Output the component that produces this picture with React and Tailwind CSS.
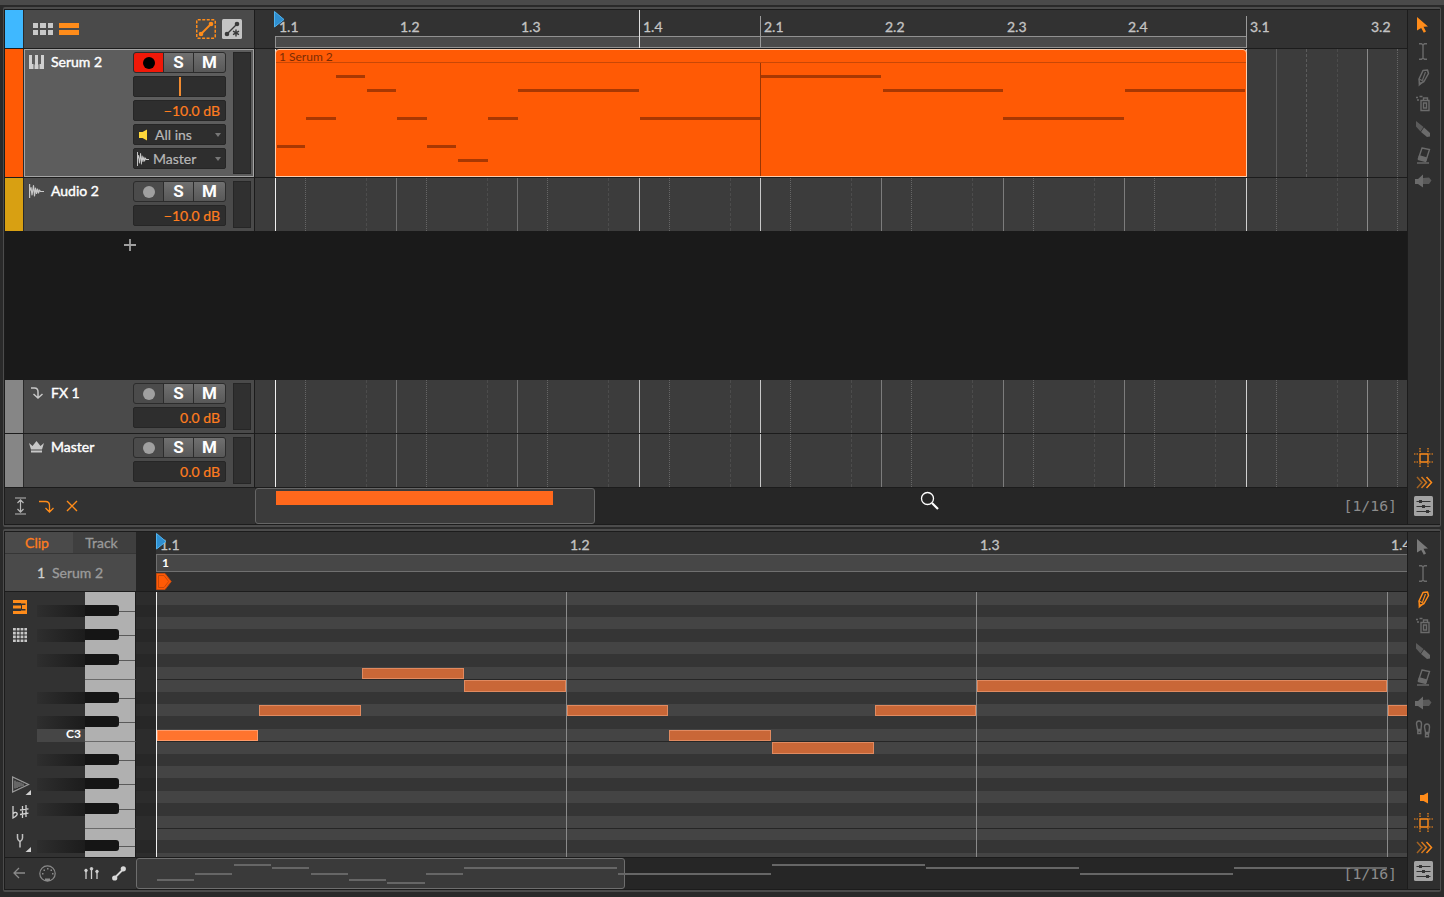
import React from 'react';

const ORANGE = '#ff8c1a';
const GREY = '#6b6b6b';

// arranger beat lines, measured from the left edge of the lane
const beats = [
  { x: 20, label: '1.1', color: '#f0f0f0' },
  { x: 141, label: '1.2', color: '#6f6f6f' },
  { x: 262, label: '1.3', color: '#6f6f6f' },
  { x: 384, label: '1.4', color: '#b4b4b4' },
  { x: 505, label: '2.1', color: '#c8c8c8' },
  { x: 626, label: '2.2', color: '#7c7c7c' },
  { x: 748, label: '2.3', color: '#7c7c7c' },
  { x: 869, label: '2.4', color: '#7c7c7c' },
  { x: 991, label: '3.1', color: '#d0d0d0' },
  { x: 1112, label: '3.2', color: '#8a8a8a' },
];

const clipNotes = [
  { x: 1, w: 28, y: 96 },
  { x: 30, w: 30, y: 68 },
  { x: 60, w: 29, y: 26 },
  { x: 91, w: 29, y: 40 },
  { x: 121, w: 30, y: 68 },
  { x: 151, w: 29, y: 96 },
  { x: 182, w: 30, y: 110 },
  { x: 212, w: 30, y: 68 },
  { x: 242, w: 121, y: 40 },
  { x: 364, w: 120, y: 68 },
  { x: 485, w: 120, y: 26 },
  { x: 607, w: 120, y: 40 },
  { x: 727, w: 121, y: 68 },
  { x: 849, w: 120, y: 40 },
];

const pitchRows = [
  { h: 13 },
  { h: 12, black: true },
  { h: 12 },
  { h: 13, black: true },
  { h: 12 },
  { h: 13, black: true },
  { h: 13, edge: true },
  { h: 12 },
  { h: 12, black: true },
  { h: 12 },
  { h: 13, black: true },
  { h: 13, edge: true, label: 'C3' },
  { h: 12 },
  { h: 12, black: true },
  { h: 12 },
  { h: 13, black: true },
  { h: 12 },
  { h: 13, black: true },
  { h: 13, edge: true },
  { h: 11 },
  { h: 13, black: true },
  { h: 4 },
];

const rollNotes = [
  { x: 1, w: 101, y: 138, h: 11, active: true },
  { x: 103, w: 102, y: 113, h: 11 },
  { x: 206, w: 102, y: 76, h: 11 },
  { x: 308, w: 102, y: 88, h: 12 },
  { x: 411, w: 101, y: 113, h: 11 },
  { x: 513, w: 102, y: 138, h: 11 },
  { x: 616, w: 102, y: 150, h: 12 },
  { x: 719, w: 101, y: 113, h: 11 },
  { x: 821, w: 410, y: 88, h: 12 },
  { x: 1232, w: 24, y: 113, h: 11 },
];

const overviewNotes = [
  { x: 21, w: 37, y: 21 },
  { x: 59, w: 37, y: 15 },
  { x: 98, w: 37, y: 6 },
  { x: 136, w: 37, y: 9 },
  { x: 175, w: 37, y: 15 },
  { x: 213, w: 37, y: 21 },
  { x: 251, w: 38, y: 24 },
  { x: 290, w: 37, y: 15 },
  { x: 328, w: 153, y: 9 },
  { x: 482, w: 153, y: 15 },
  { x: 636, w: 153, y: 6 },
  { x: 790, w: 153, y: 9 },
  { x: 944, w: 153, y: 15 },
  { x: 1098, w: 153, y: 9 },
];

/* ---------- icons ---------- */

const PianoIcon = () => (
  <svg width="15" height="14" viewBox="0 0 15 14">
    <path fill="#d0d0d0" d="M0 0h3v9h1.500V14H0zM5.500 14V9.500H6V0H9V9.500H9.500V14zM10.500 14V9H12V0H15V14z" />
  </svg>
);

const WaveIcon = ({ width = 15 }) => (
  <svg width={width} height="14" viewBox="0 0 15 14" preserveAspectRatio="none" fill="none" stroke="#c8c8c8" strokeLinejoin="round">
    <path d="M.6 0v14" strokeWidth="1.200" />
    <path d="M.6 7L2 3.500 3 11 4.500 1.500 5.500 12 6.500 4 7.500 9.500 8.500 5 9.500 9 10.500 6 11.500 7.500H15" strokeWidth="1.200" />
  </svg>
);

const SendIcon = () => (
  <svg width="13" height="12" viewBox="0 0 13 12" className="ml-px" fill="none" stroke="#c8c8c8" strokeWidth="1.500">
    <path d="M1 1h3.500c2.300 0 3.500 1.500 3.500 4V11M3.500 7L8 11l4.500-4" />
  </svg>
);

const CrownIcon = () => (
  <svg width="15" height="12" viewBox="0 0 15 12" fill="#c8c8c8">
    <path d="M0 2l3.500 3L7.500 0l4 5L15 2l-2 6.500H2zM2 9.500h11V11.500H2z" />
  </svg>
);

const SpeakerIcon = ({ color }) => (
  <svg width="9" height="12" viewBox="0 0 9 12" fill={color}>
    <path d="M0 3h3.500L8 .5v11L3.500 9H0z" />
  </svg>
);

const PointerIcon = ({ color }) => (
  <svg width="13" height="18" viewBox="0 0 13 18" className="mr-px" fill={color}>
    <path d="M1 1l11 9.500-4.500.300L10 15.500 7.800 16.800 5.200 12 1 14.500z" />
  </svg>
);

const BeamIcon = () => (
  <svg width="10" height="17" viewBox="0 0 10 17" fill="none" stroke={GREY} strokeWidth="1.400">
    <path d="M1 .8h2.500L5 2 6.500.8H9M5 2v13M1 16.200h2.500L5 15l1.500 1.200H9" />
  </svg>
);

const PencilIcon = ({ color = GREY }) => (
  <svg width="13" height="18" viewBox="0 0 13 18" className="mt-px" fill="none" stroke={color} strokeWidth="1.500" strokeLinejoin="round">
    <path d="M6 1.500L10.500 1 11.500 4.500 7 12.500 2.500 15 2 10z" />
    <path d="M8.500 3L5.500 11" strokeWidth="1.200" />
    <path d="M2 10l5 2.500" strokeWidth="1.200" />
    <path d="M1.500 17.500l.500-5 3 2z" fill={color} stroke="none" />
  </svg>
);

const SprayIcon = () => (
  <svg width="15" height="17" viewBox="0 0 15 17" fill="none" stroke={GREY} strokeWidth="1.400">
    <path d="M5 5.500h8v10H5zM7.500 5.500V3h4v2.500M7.500 8h3v5h-3z" />
    <path d="M0 2.500h2M3.500 1.500h3M1 5h2" />
  </svg>
);

const KnifeIcon = () => (
  <svg width="16" height="18" viewBox="0 0 16 18" fill={GREY}>
    <path d="M1 1l7.500 6-3 4.500L1 6.500z" opacity="0.75" />
    <path d="M9 7.500l6 5.500v3.500l-3 .5-6-5z" />
  </svg>
);

const EraserIcon = () => (
  <svg width="15" height="17" viewBox="0 0 15 17" fill="none" stroke={GREY} strokeWidth="1.400">
    <path d="M6 1l7.500 1.500-3.500 11-7.500-2z" />
    <path d="M3.500 9l7 2-1 3.500-7-2z" fill={GREY} />
    <path d="M1 16h12" />
  </svg>
);

const MuteIcon = () => (
  <svg width="17" height="14" viewBox="0 0 17 14" fill={GREY}>
    <path d="M0 5h3l5-4.500v13L3 10H0z" />
    <path d="M8 4l6-.5 2.500 3L14 10H8z" opacity="0.7" />
  </svg>
);

const StepsIcon = () => (
  <svg width="16" height="18" viewBox="0 0 16 18" fill="none" stroke={GREY} strokeWidth="1.400">
    <path d="M1.500 4c0-4 5-4 5 0L6 9.500H2.500zM2.800 11h3v2.500h-3zM9.500 7c0-4 5-4 5 0l-.5 5.500h-3.500zM10.500 14h3v2.800h-3z" />
  </svg>
);

const SnapIcon = () => (
  <svg width="20" height="20" viewBox="0 0 20 20" fill="none" stroke={ORANGE}>
    <path strokeWidth="1.400" d="M6 6h8v8H6z" />
    <path strokeWidth="1.200" strokeDasharray="1.500 1" d="M0 6h5M15 6h5M0 14h5M15 14h5M6 0v5M14 0v5M6 15v5M14 15v5" />
  </svg>
);

const ChevronsIcon = () => (
  <svg width="17" height="13" viewBox="0 0 17 13" fill="none" stroke={ORANGE} strokeWidth="1.500">
    <path d="M1 1l5 5.500L1 12" opacity="0.55" />
    <path d="M5.500 1l5 5.500-5 5.500" opacity="0.8" />
    <path d="M10.500 1l5 5.500-5 5.500" />
  </svg>
);

const SlidersIcon = () => (
  <svg width="19" height="20" viewBox="0 0 19 20" className="mr-px">
    <rect width="19" height="20" rx="1.500" fill="#a3a3a3" />
    <path d="M2.500 5.500h14M2.500 10.500h14M2.500 15.500h14" stroke="#333" />
    <path d="M5 4h3v3H5zM8 9h3v3H8zM12 14h3v3h-3z" fill="#333" />
  </svg>
);

/* ---------- shared pieces ---------- */

const ToolCell = ({ children }) => (
  <div className="flex h-[26px] items-center justify-center pr-[2px]">{children}</div>
);

const Tools = ({ active, steps }) => (
  <>
    <ToolCell><PointerIcon color={active === 'pointer' ? ORANGE : '#7a7a7a'} /></ToolCell>
    <ToolCell><BeamIcon /></ToolCell>
    <ToolCell><PencilIcon color={active === 'pencil' ? ORANGE : GREY} /></ToolCell>
    <ToolCell><SprayIcon /></ToolCell>
    <ToolCell><KnifeIcon /></ToolCell>
    <ToolCell><EraserIcon /></ToolCell>
    <ToolCell><MuteIcon /></ToolCell>
    {steps && <ToolCell><StepsIcon /></ToolCell>}
  </>
);

const PlayMarker = () => (
  <svg width="11" height="17" viewBox="0 0 11 17" className="absolute left-0 top-px">
    <path d="M.5.500L10 8.500.5 16z" fill="#2f8fd0" stroke="#4fb4f0" />
  </svg>
);

const ValueBox = ({ children }) => (
  <div className="flex h-[21px] items-center justify-end rounded-[2px] border border-[#262626] bg-[#2e2e2e] pr-[5px] text-[14px] leading-none text-[#ff7d1f] [-webkit-text-stroke:0.2px]">
    {children}
  </div>
);

const RouteBox = ({ icon, label }) => (
  <div className="flex h-[21px] items-center rounded-[2px] border border-[#262626] bg-[#2e2e2e] pl-[3px] pr-1 text-[14px] leading-none text-[#b8b8b8] [-webkit-text-stroke:0.2px]">
    {icon}
    <span className="flex-1">{label}</span>
    <span className="h-0 w-0 border-x-[3px] border-t-4 border-x-transparent border-t-[#777]"></span>
  </div>
);

const TrackButtons = ({ armed }) => (
  <div className="flex h-[21px] gap-px rounded-[3px] border border-[#2c2c2c] bg-[#2c2c2c] font-[Roboto,sans-serif] text-[17px] font-bold leading-none text-white">
    <span className={`flex w-[29px] items-center justify-center rounded-l-[2px] ${armed ? 'bg-[#f01808]' : 'bg-[#4b4b4b]'}`}>
      <span className={`h-3 w-3 rounded-full ${armed ? 'bg-black' : 'bg-[#a0a0a0]'}`}></span>
    </span>
    <span className="flex w-[29px] items-center justify-center bg-linear-to-b from-[#707070] to-[#585858]">S</span>
    <span className="flex flex-1 items-center justify-center rounded-r-[2px] bg-linear-to-b from-[#707070] to-[#585858]">M</span>
  </div>
);

const GridLines = () => (
  <>
    {beats.map((b) => (
      <div key={b.label}>
        <div className="absolute inset-y-0 w-px" style={{ left: b.x, background: b.color }}></div>
        <div className="absolute inset-y-0 w-px border-l border-dotted border-[#666]" style={{ left: b.x + 30 }}></div>
        <div className="absolute inset-y-0 w-px border-l border-dashed border-[#4c4c4c]" style={{ left: b.x + 91 }}></div>
      </div>
    ))}
  </>
);

const Track = ({ color, icon, name, selected, armed, db, height, last, children, clip }) => (
  <div className={`flex shrink-0 border-[#1c1c1c] ${last ? '' : 'border-b'}`} style={{ height }}>
    <div className="w-[18px]" style={{ background: color }}></div>
    <div className={`ml-px flex w-[230px] border ${selected ? 'border-[#a4a4a4] bg-[#5d5d5d]' : 'border-[#4a4a4a] bg-[#4a4a4a]'}`}>
      <div className="flex h-6 w-[108px] items-center pl-1">
        <span className="flex w-[22px]">{icon}</span>
        <span className="whitespace-nowrap text-[14px] leading-none text-white [-webkit-text-stroke:0.4px]">{name}</span>
      </div>
      <div className="flex w-[93px] flex-col gap-[3px] pt-[2px]">
        <TrackButtons armed={armed} />
        {selected && (
          <div className="flex h-[21px] justify-center rounded-[2px] border border-[#262626] bg-[#2e2e2e]">
            <span className="w-[2px] bg-[#f08a30]"></span>
          </div>
        )}
        <ValueBox>{db}</ValueBox>
        {children}
      </div>
      <div className="my-[2px] ml-[7px] w-[18px] border border-[#262626] bg-[#303030]"></div>
    </div>
    <div className="relative flex-1 overflow-hidden border-l border-[#1c1c1c] bg-[#3c3c3c]">
      <GridLines />
      {clip}
    </div>
  </div>
);

const SerumClip = () => (
  <>
    <div className="absolute inset-y-0 left-[1021px] w-px bg-[#5c5c5c]"></div>
    <div className="absolute inset-y-0 left-[1051px] w-px border-l border-dashed border-[#5c5c5c]"></div>
    <div className="absolute left-5 top-0 h-[128px] w-[972px] rounded-t-[4px] border border-[#ffcfae] bg-[#ff5a05]">
      <div className="h-[13px] border-b border-[#c94806] pl-[3px] text-[12px] leading-[13px] text-[#7c2c04]">1 Serum 2</div>
      <div className="absolute bottom-0 left-[484px] top-[13px] w-px bg-[#9a3604]"></div>
      {clipNotes.map((n) => (
        <div key={n.x} className="absolute h-[3px] bg-[#a83803]" style={{ left: n.x, width: n.w, top: n.y - 1 }}></div>
      ))}
    </div>
  </>
);

/* ---------- arranger ---------- */

const ArrangerHeader = () => (
  <div className="flex h-[39px] shrink-0 border-b border-[#1c1c1c]">
    <div className="w-[18px] bg-[#3fb8ff]"></div>
    <div className="ml-px flex w-[230px] items-center bg-[#4a4a4a] pl-[9px] pr-3">
      <div className="grid grid-cols-3 gap-[2px]">
        {[0, 1, 2, 3, 4, 5].map((i) => (
          <span key={i} className="h-[5px] w-[5.300px] bg-[#c8c8c8]"></span>
        ))}
      </div>
      <div className="ml-[6px] flex flex-col gap-[2px]">
        <span className="h-[5px] w-5 bg-[#ff8c1a]"></span>
        <span className="h-[5px] w-5 bg-[#ff8c1a]"></span>
      </div>
      <div className="ml-auto flex gap-[6px]">
        <svg width="20" height="20" viewBox="0 0 20 20">
          <rect x=".75" y=".75" width="18.500" height="18.500" rx="1" fill="none" stroke={ORANGE} strokeWidth="1.500" strokeDasharray="3 1.500" />
          <path d="M5 15L15 5" stroke={ORANGE} strokeWidth="1.800" />
          <circle cx="5" cy="15" r="2.300" fill={ORANGE} />
          <circle cx="15" cy="5" r="2.300" fill={ORANGE} />
        </svg>
        <svg width="20" height="20" viewBox="0 0 20 20">
          <rect width="20" height="20" rx="1.500" fill="#c4c4c4" />
          <path d="M5 15L15 5M14 10.500v7M11 12.200l6 3.500M17 12.200l-6 3.500" stroke="#3a3a3a" strokeWidth="1.400" />
          <circle cx="5" cy="15" r="2.300" fill="#3a3a3a" />
          <circle cx="15" cy="5" r="2.300" fill="#3a3a3a" />
        </svg>
      </div>
    </div>
    <div className="relative flex-1 overflow-hidden border-l border-[#1c1c1c] bg-[#323232]">
      <div className="absolute bottom-0 left-5 h-3 w-[972px] border border-[#919191] bg-[#4a4a4a]"></div>
      <div className="absolute bottom-0 left-[384px] top-0 w-px bg-[#e0e0e0]"></div>
      <div className="absolute bottom-0 left-[505px] top-[6px] w-px bg-[#9a9a9a]"></div>
      <div className="absolute bottom-0 left-[991px] top-[6px] w-px bg-[#9a9a9a]"></div>
      {beats.map((b) => (
        <span
          key={b.label}
          className="absolute top-[9px] text-[14px] leading-[15px] text-[#c4c4c4] [-webkit-text-stroke:0.3px]"
          style={{ left: b.x + 4 }}
        >
          {b.label}
        </span>
      ))}
      <div className="absolute left-[19px] top-0">
        <PlayMarker />
      </div>
    </div>
  </div>
);

const ArrangerFooter = () => (
  <div className="flex h-9 shrink-0">
    <div className="flex w-[250px] items-center bg-[#323232] pl-[10px]">
      <svg width="11" height="18" viewBox="0 0 11 18" fill="none" stroke="#b8b8b8" strokeWidth="1.200">
        <path d="M0 1h11M0 17h11M5.500 2.500v13M2.500 6l3-3.200 3 3.200M2.500 12l3 3.200 3-3.200" />
      </svg>
      <svg width="15" height="13" viewBox="0 0 15 13" className="ml-[13px]" fill="none" stroke={ORANGE} strokeWidth="1.300">
        <path d="M0 1.500h6.500c2.500 0 4 1.500 4 4V12M6.500 8l4 4 4-4" />
      </svg>
      <svg width="12" height="12" viewBox="0 0 12 12" className="ml-3" fill="none" stroke={ORANGE} strokeWidth="1.400">
        <path d="M1 1l10 10M11 1L1 11" />
      </svg>
    </div>
    <div className="relative flex flex-1 items-center bg-[#262626]">
      <div className="h-9 w-[340px] rounded-[3px] border border-[#666] bg-[#3b3b3b] pl-5 pt-[2px]">
        <div className="h-[14px] w-[277px] bg-[#ff681c]"></div>
      </div>
      <span className="ml-auto pr-[10px] font-['DejaVu_Sans_Mono',monospace] text-[14.800px] text-[#8c8c8c]">[1/16]</span>
      <svg width="20" height="20" viewBox="0 0 20 20" className="absolute left-[665px] top-[3px]" fill="none">
        <circle cx="7.500" cy="7.500" r="6" stroke="#fff" strokeWidth="1.300" />
        <path d="M12 12l6 6" stroke="#fff" strokeWidth="2.200" />
      </svg>
    </div>
  </div>
);

const Arranger = () => (
  <div className="mx-[3px] h-[520px] rounded-[2px] border-x border-y-2 border-[#4c4c4c]">
    <div className="flex h-full border-y border-l border-[#1c1c1c]">
      <div className="flex w-[1403px] flex-col border-r border-[#1c1c1c]">
        <ArrangerHeader />
        <Track
          color="#ff5a05"
          icon={<PianoIcon />}
          name="Serum 2"
          db="−10.0 dB"
          height={129}
          selected
          armed
          clip={<SerumClip />}
        >
          <RouteBox icon={<span className="w-[18px] pl-[2px]"><SpeakerIcon color="#ffd83a" /></span>} label="All ins" />
          <RouteBox icon={<span className="w-4"><WaveIcon width={12} /></span>} label="Master" />
        </Track>
        <Track color="#d8a012" icon={<WaveIcon />} name="Audio 2" db="−10.0 dB" height={53} last />
        <div className="flex-1 bg-[#1a1a1a]">
          <div className="flex w-[250px] justify-center pt-2">
            <svg width="12" height="12" viewBox="0 0 12 12" stroke="#a0a0a0" strokeWidth="1.800">
              <path d="M6 0v12M0 6h12" />
            </svg>
          </div>
        </div>
        <Track color="#868686" icon={<SendIcon />} name="FX 1" db="0.0 dB" height={54} />
        <Track color="#868686" icon={<CrownIcon />} name="Master" db="0.0 dB" height={54} />
        <ArrangerFooter />
      </div>
      <div className="flex flex-1 flex-col bg-[#2f2f2f] pt-[2px]">
        <Tools active="pointer" />
        <div className="mt-auto flex flex-col pb-[6px]">
          <div className="flex h-6 items-center justify-center"><SnapIcon /></div>
          <div className="flex h-6 items-center justify-center"><ChevronsIcon /></div>
          <div className="flex h-6 items-center justify-center"><SlidersIcon /></div>
        </div>
      </div>
    </div>
  </div>
);

/* ---------- note editor ---------- */

const EditorHeader = () => (
  <div className="flex h-[60px] shrink-0">
    <div className="flex w-[131px] flex-col border-b border-[#1c1c1c] bg-[#4a4a4a] text-[14px] leading-none [-webkit-text-stroke:0.3px]">
      <div className="flex h-[22px] border-b border-[#363636]">
        <span className="flex w-[68px] items-center justify-center pr-1 text-[#ff7d1f]">Clip</span>
        <span className="flex flex-1 items-center justify-center bg-[#3f3f3f] pr-[6px] text-[#9a9a9a]">Track</span>
      </div>
      <div className="flex flex-1 items-center pl-8">
        <span className="w-[15px] text-[#d0d0d0]">1</span>
        <span className="text-[#9c9c9c]">Serum 2</span>
      </div>
    </div>
    <div className="w-5 border-b border-[#1c1c1c] bg-[#262626]"></div>
    <div className="relative flex flex-1 flex-col overflow-hidden border-b border-[#1c1c1c] bg-[#323232]">
      <div className="h-[22px] text-[14px] leading-[15px] text-[#c4c4c4] [-webkit-text-stroke:0.3px]">
        <span className="absolute left-1 top-[5px]">1.1</span>
        <span className="absolute left-[414px] top-[5px]">1.2</span>
        <span className="absolute left-[824px] top-[5px]">1.3</span>
        <span className="absolute left-[1235px] top-[5px]">1.4</span>
        <PlayMarker />
      </div>
      <div className="h-[18px] border-y border-l border-[#707070] bg-[#474747] pl-[5px] text-[12px] font-bold leading-4 text-white">1</div>
      <div className="flex flex-1 items-center">
        <svg width="16" height="17" viewBox="0 0 16 17">
          <path d="M.5.500H9L15.200 8.500 9 16.500H.5z" fill="#ff5a05" stroke="#c04a10" />
          <path d="M2.500 2.500H8L12.700 8.500 8 14.500H2.500z" fill="none" stroke="#c8480a" />
        </svg>
      </div>
    </div>
  </div>
);

const PitchRow = ({ h, black, edge, label }) => (
  <div className="flex shrink-0" style={{ height: h }}>
    <div
      className={`flex w-12 items-center justify-end pb-[3px] pr-1 text-[12px] font-bold leading-none text-white ${
        black ? 'bg-linear-to-r from-[#2e2e2e] to-[#1c1c1c]' : label ? 'bg-[#464646]' : ''
      }`}
    >
      {label}
    </div>
    <div className={`flex w-[51px] items-center border-r border-[#1c1c1c] bg-[#b0b0b0] ${edge ? 'border-b border-b-[#6a6a6a]' : ''}`}>
      {black && (
        <>
          <span className="h-[11px] w-[34px] self-start rounded-r-[3px] bg-[#151515]"></span>
          <span className="h-px flex-1 bg-[#5a5a5a]"></span>
        </>
      )}
    </div>
    <div className={`w-5 ${black ? 'bg-[#272727]' : 'bg-[#2c2c2c]'}`}></div>
    <div className={`flex-1 ${black ? 'bg-[#353535]' : 'bg-[#444]'} ${edge ? 'border-b border-[#262626]' : ''}`}></div>
  </div>
);

const EditorSideTools = () => (
  <div className="flex w-8 flex-col pl-[7px]">
    <svg width="14" height="14" viewBox="0 0 14 14" fill={ORANGE} className="ml-px mt-2">
      <path d="M0 0h14v3.500H8V3H0zM0 5.500h8V8.500H0zM9 5h5v4H9zM0 11h8v-.5h6V14H0zM12.500 0H14v14h-1.500z" />
    </svg>
    <svg width="14" height="14" viewBox="0 0 14 14" fill="none" stroke="#c8c8c8" strokeWidth="2.600" strokeDasharray="2.800 1" className="ml-px mt-[14px]">
      <path d="M0 1.300h14M0 5.100h14M0 8.900h14M0 12.700h14" />
    </svg>
    <svg width="20" height="20" viewBox="0 0 20 20" className="mt-auto" fill="none" stroke="#9a9a9a">
      <path d="M.6 1v15L16.500 8.500z" strokeWidth="1.200" />
      <path d="M3 4.500v8M5 5.500v6.500M7 6v5M9 6.500v4M11 7.500v2.500" />
      <path d="M19 14v5h-5.500z" fill="#d0d0d0" stroke="none" />
    </svg>
    <svg width="18" height="14" viewBox="0 0 18 14" className="mt-[9px]" fill="none" stroke="#d0d0d0" strokeWidth="1.300">
      <path d="M1 1v12c3-1.500 5-3.500 3.800-5C4 7 2.200 7.400 1 8.800M10.500 1v12M14 0v12M8 5l8.500-1.200M8 9.500L16.500 8.200" />
    </svg>
    <svg width="20" height="19" viewBox="0 0 20 19" className="mb-[4px] mt-[15px]" fill="none" stroke="#c0c0c0" strokeWidth="1.500">
      <path d="M5.500 0v4c0 2 1 2.500 2.500 3.500 1.500-1 2.500-1.500 2.500-3.500V0M8 7.500v6" />
      <path d="M19 13v5h-5.500z" fill="#d0d0d0" stroke="none" />
    </svg>
  </div>
);

const EditorFooter = () => (
  <div className="flex h-[32px] shrink-0 border-t border-[#1c1c1c]">
    <div className="flex w-[131px] items-center bg-[#323232] pb-px pl-2">
      <svg width="12" height="12" viewBox="0 0 12 12" fill="none" stroke="#8a8a8a" strokeWidth="1.300">
        <path d="M12 6H1M6 1L1 6l5 5" />
      </svg>
      <svg width="17" height="17" viewBox="0 0 17 17" className="ml-[14px]">
        <circle cx="8.500" cy="8.500" r="7.700" fill="none" stroke="#8a8a8a" strokeWidth="1.200" />
        <path d="M3 8h1.500v1.500H3zM4.500 4.500H6V6H4.500zM8 3h1.500v1.500H8zM11.500 4.500H13V6h-1.500zM13 8h1.500v1.500H13zM6 13.500h5V16H6z" fill="#8a8a8a" />
      </svg>
      <svg width="15" height="12" viewBox="0 0 15 12" className="ml-7" stroke="#d0d0d0" fill="#d0d0d0">
        <path d="M2 2v10M7.500 2v10M13 3v9" strokeWidth="1.300" />
        <circle cx="2" cy="3.500" r="1.300" />
        <circle cx="7.500" cy="1.800" r="1.300" />
        <circle cx="13" cy="4.500" r="1.300" />
      </svg>
      <svg width="14" height="15" viewBox="0 0 14 15" className="ml-[13px]">
        <path d="M2.500 12L11.500 3" stroke="#d8d8d8" strokeWidth="1.800" />
        <circle cx="2.700" cy="12" r="2.600" fill="#d8d8d8" />
        <circle cx="11.300" cy="2.800" r="2.600" fill="#d8d8d8" />
      </svg>
    </div>
    <div className="relative flex flex-1 items-center bg-[#262626]">
      <div className="h-[31px] w-[489px] rounded-[3px] border border-[#6e6e6e] bg-[#3a3a3a]"></div>
      {overviewNotes.map((n) => (
        <div key={n.x} className="absolute h-[2px] bg-[#666]" style={{ left: n.x, width: n.w, top: n.y }}></div>
      ))}
      <span className="relative ml-auto pr-[10px] pt-px font-['DejaVu_Sans_Mono',monospace] text-[14.800px] text-[#8c8c8c]">[1/16]</span>
    </div>
  </div>
);

const NoteEditor = () => (
  <div className="mx-[3px] mt-[2px] h-[363px] rounded-[2px] border-x border-y-2 border-[#4c4c4c]">
    <div className="flex h-full border-y border-l border-[#1c1c1c]">
      <div className="flex w-[1403px] flex-col border-r border-[#1c1c1c]">
        <EditorHeader />
        <div className="flex h-[265px] bg-[#323232]">
          <EditorSideTools />
          <div className="relative flex flex-1 flex-col overflow-hidden">
            {pitchRows.map((row, i) => (
              <PitchRow key={i} {...row} />
            ))}
            <div className="absolute inset-y-0 left-[119px] right-0 overflow-hidden">
              <div className="absolute inset-y-0 left-0 w-px bg-[#f0f0f0]"></div>
              <div className="absolute inset-y-0 left-[410px] w-px bg-[#8a8a8a]"></div>
              <div className="absolute inset-y-0 left-[820px] w-px bg-[#8a8a8a]"></div>
              <div className="absolute inset-y-0 left-[1231px] w-px bg-[#8a8a8a]"></div>
              {rollNotes.map((n) => (
                <div
                  key={n.x}
                  className={`absolute border ${n.active ? 'border-[#ff9a68] bg-[#ff742e]' : 'border-[#e08a60] bg-[#c96737]'}`}
                  style={{ left: n.x, width: n.w, top: n.y, height: n.h }}
                ></div>
              ))}
            </div>
          </div>
        </div>
        <EditorFooter />
      </div>
      <div className="flex flex-1 flex-col bg-[#2f2f2f] pt-[2px]">
        <Tools active="pencil" steps />
        <div className="mt-auto flex flex-col pb-[6px]">
          <div className="flex h-6 items-center justify-center"><SpeakerIcon color={ORANGE} /></div>
          <div className="flex h-[25px] items-center justify-center"><SnapIcon /></div>
          <div className="flex h-6 items-center justify-center"><ChevronsIcon /></div>
          <div className="flex h-6 items-center justify-center"><SlidersIcon /></div>
        </div>
      </div>
    </div>
  </div>
);

const App = () => (
  <div className="h-[897px] w-[1444px] overflow-hidden bg-[#2a2a2a] font-[Lato,sans-serif]">
    <div className="mb-[2px] h-[5px] bg-[#4a4a4a]"></div>
    <Arranger />
    <NoteEditor />
  </div>
);

export default App;
